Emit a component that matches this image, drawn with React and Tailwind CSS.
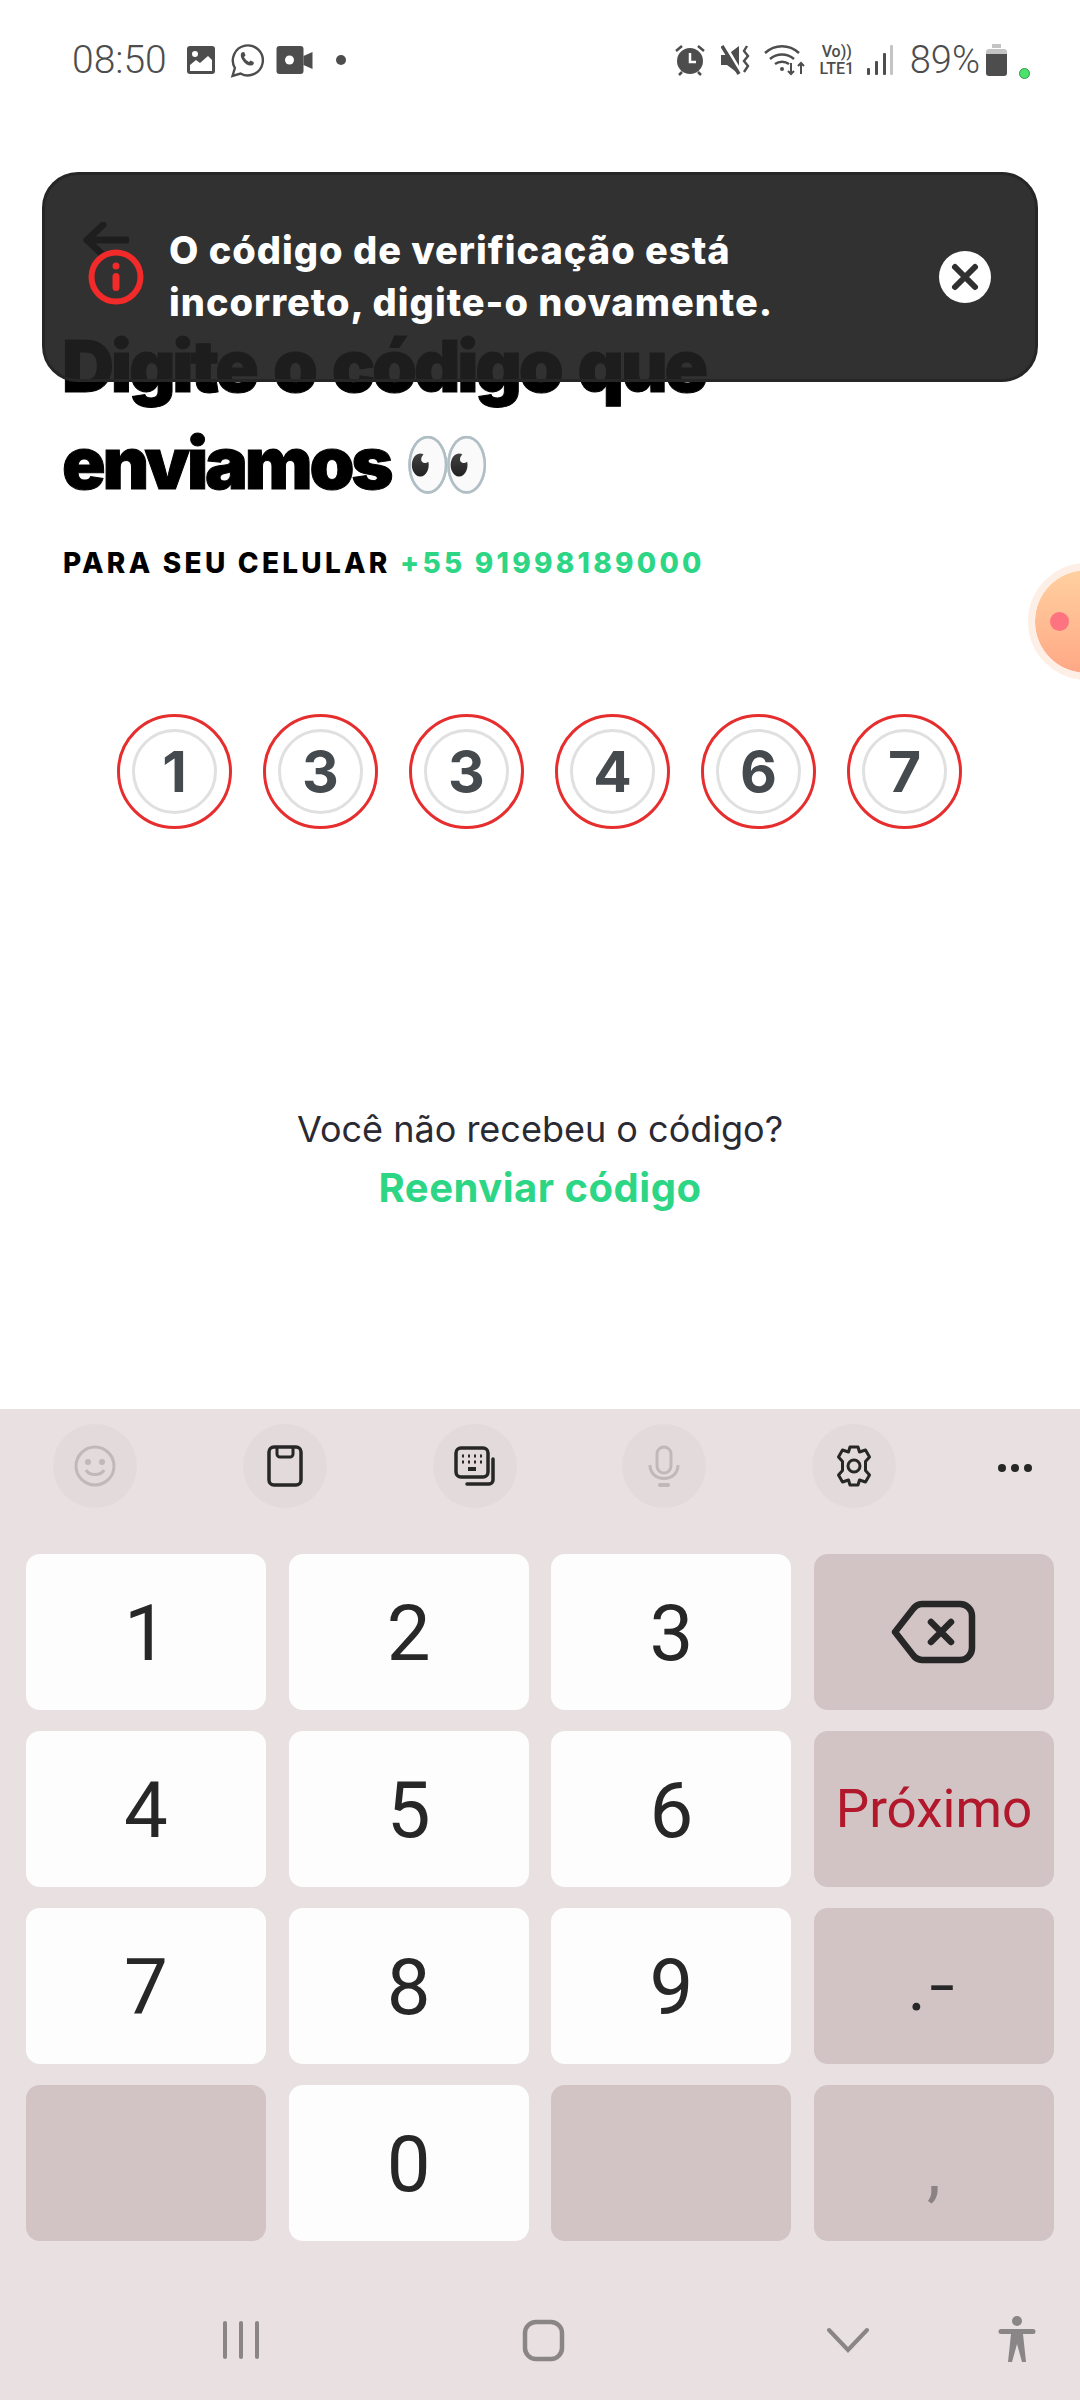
import React from 'react';

function StatusBar() {
  return (
    <div className="h-[118px] flex items-start justify-between pt-[40px] pl-[72px] pr-[50px] text-[#4d4d4d]">
      <div className="flex items-center h-[40px]">
        <span className="text-[39px] leading-[40px] font-['Roboto',sans-serif] font-light w-[100px]">08:50</span>
        <svg className="ml-[14px]" width="30" height="30" viewBox="0 0 30 30">
          <rect x="1" y="1" width="28" height="28" rx="3" fill="#4d4d4d" />
          <circle cx="9" cy="9" r="3" fill="#fff" />
          <path d="M4 26v-6l6-5 4 3 8-7 4 4v11z" fill="#fff" />
        </svg>
        <svg className="ml-[14px]" width="35" height="36" viewBox="0 0 34 36" fill="none">
          <path d="M2 34l2.400-8A15 15 0 1 1 10 31.500z" stroke="#4d4d4d" strokeWidth="2.400" />
          <path d="M12 10c-2 1-2.500 4 0 8s6 6 9 5.500c2-.5 3-2.500 2-3.500l-3-1.500-1.500 1.500c-2-1-4-3-5-5l1.500-1.500-1-3c-.5-.8-1.500-.8-2 0z" fill="#4d4d4d" />
        </svg>
        <svg className="ml-[11px]" width="37" height="28" viewBox="0 0 36 28">
          <rect x="0" y="0" width="27" height="28" rx="3" fill="#4d4d4d" />
          <circle cx="13" cy="14" r="4.500" fill="#fff" />
          <path d="M27 10l9-4v17l-9-4z" fill="#4d4d4d" />
        </svg>
        <span className="ml-[23px] w-[10px] h-[10px] rounded-full bg-[#4d4d4d]" />
      </div>
      <div className="flex items-center h-[40px]">
        <svg width="30" height="32" viewBox="0 0 30 32">
          <circle cx="15" cy="17" r="13" fill="#4d4d4d" />
          <path d="M15 9v9h6" stroke="#fff" strokeWidth="2.500" fill="none" />
          <path d="M1 7l6-5M29 7l-6-5M4 31l3-3M26 31l-3-3" stroke="#4d4d4d" strokeWidth="2.500" />
        </svg>
        <svg className="ml-[16px]" width="30" height="30" viewBox="0 0 30 30">
          <path d="M0 10h6l12-9v28L6 20H0z" fill="#4d4d4d" />
          <path d="M4 0l17 29" stroke="#fff" strokeWidth="3" />
          <path d="M1 1l17 28" stroke="#4d4d4d" strokeWidth="3.500" />
          <path d="M26 1l-3 5 4 5-4 5 4 5-4 6" stroke="#4d4d4d" strokeWidth="2.400" fill="none" />
        </svg>
        <svg className="ml-[13px]" width="42" height="32" viewBox="0 0 42 32" fill="none">
          <path d="M1 9c10-9 24-9 34 0M6 15c7-6 17-6 24 0M11 20c4-3 10-3 14 0" stroke="#4d4d4d" strokeWidth="2.500" />
          <circle cx="18" cy="25" r="2" fill="#4d4d4d" />
          <path d="M27 19v11M24 27l3 3 3-3M37 30V19M34 22l3-3 3 3" stroke="#4d4d4d" strokeWidth="2" />
        </svg>
        <div className="ml-[12px] w-[38px] flex flex-col items-center font-['Roboto',sans-serif] font-medium leading-none text-[16px]">
          <span className="h-[17px]">Vo))</span>
          <span className="h-[16px]">LTE1</span>
        </div>
        <svg className="ml-[10px]" width="28" height="30" viewBox="0 0 28 30">
          <rect x="1" y="23" width="3" height="7" rx="1" fill="#4d4d4d" />
          <rect x="9" y="16" width="3" height="14" rx="1" fill="#4d4d4d" />
          <rect x="17" y="8" width="3" height="22" rx="1" fill="#4d4d4d" />
          <rect x="24" y="0" width="3" height="30" rx="1" fill="#c4c4c4" />
        </svg>
        <span className="ml-[16px] text-[38px] leading-[40px] font-['Roboto',sans-serif] font-light">89%</span>
        <svg className="ml-[6px]" width="21" height="32" viewBox="0 0 21 32">
          <path d="M6 0h9v4H6z" fill="#c4c4c4" />
          <path d="M0 8a3 3 0 0 1 3-3h15a3 3 0 0 1 3 3v2H0z" fill="#c4c4c4" />
          <path d="M0 10h21v19a3 3 0 0 1-3 3H3a3 3 0 0 1-3-3z" fill="#4d4d4d" />
        </svg>
        <span className="ml-[12px] mt-[26px] w-[11px] h-[11px] rounded-full bg-[#4be36b] border border-[#2f9c48]" />
      </div>
    </div>
  );
}

function Toast() {
  return (
    <div className="absolute left-[42px] top-[172px] w-[996px] h-[210px] rounded-[36px] bg-[#1f1f1f]/[0.92] border-[3px] border-[#262626] flex items-center pl-[43px] pr-[44px]">
      <svg width="56" height="56" viewBox="0 0 56 56" fill="none" className="shrink-0">
        <circle cx="28" cy="28" r="24.500" stroke="#f22a2a" strokeWidth="6" />
        <circle cx="28" cy="17" r="3.500" fill="#f22a2a" />
        <rect x="24.500" y="24" width="7" height="18" rx="3.500" fill="#f22a2a" />
      </svg>
      <p className="ml-[25px] -mt-[3px] flex-1 text-white font-['Inter',sans-serif] font-extrabold text-[38px] leading-[52px] tracking-[1px]">
        O código de verificação está
        <br />
        incorreto, digite-o novamente.
      </p>
      <svg width="52" height="52" viewBox="0 0 52 52" className="shrink-0">
        <circle cx="26" cy="26" r="26" fill="#fff" />
        <path d="M16 16l20 20M36 16L16 36" stroke="#303030" strokeWidth="6" strokeLinecap="round" />
      </svg>
    </div>
  );
}

function Heading() {
  return (
    <div className="pl-[62px]">
      <button className="block h-[40px] mt-[102px] ml-[21px]" aria-label="Voltar">
        <svg width="46" height="36" viewBox="0 0 46 36" fill="none">
          <path d="M20 3L4 18l16 15M4 18h40" stroke="#111" strokeWidth="7" strokeLinecap="round" strokeLinejoin="round" />
        </svg>
      </button>
      <h1 className="mt-[58px] font-['Inter',sans-serif] font-black text-black text-[72px] leading-[96px] tracking-[-3.200px] [word-spacing:6px] [-webkit-text-stroke:1px_black]">
        Digite o código que
        <br />
        enviamos <span className="-ml-[5px] font-['Noto_Sans',sans-serif] text-[71px] tracking-normal">👀</span>
      </h1>
      <p className="mt-[35px] pl-[1px] font-['Inter',sans-serif] font-extrabold text-[28px] leading-[34px] tracking-[3.250px] text-black">
        PARA SEU CELULAR <span className="text-[#2dd685]">+55 91998189000</span>
      </p>
    </div>
  );
}

function CodeDigit({ value }) {
  return (
    <div className="w-[115px] h-[115px] rounded-full border-[3px] border-[#e62e2e] flex items-center justify-center">
      <div className="w-[85px] h-[85px] rounded-full border-[3px] border-[#e0e0e0] flex items-center justify-center font-['Inter',sans-serif] font-bold text-[57px] text-[#454a4f]">
        {value}
      </div>
    </div>
  );
}

function Icon({ disabled, children }) {
  return (
    <div className="w-[84px] h-[84px] rounded-full bg-[#e3dadb] flex items-center justify-center">
      <svg width="44" height="44" viewBox="0 0 44 44" fill="none" stroke={disabled ? '#c1b8b9' : '#272727'} strokeWidth="3">
        {children}
      </svg>
    </div>
  );
}

function Toolbar() {
  return (
    <div className="h-[145px] pl-[53px] flex items-start pt-[15px] gap-x-[105.8px]">
      <Icon disabled>
        <circle cx="22" cy="22" r="19" />
        <circle cx="15" cy="18" r="1.500" fill="#c1b8b9" />
        <circle cx="29" cy="18" r="1.500" fill="#c1b8b9" />
        <path d="M13 26c3 6 15 6 18 0" />
      </Icon>
      <Icon>
        <rect x="6" y="3" width="32" height="38" rx="5" strokeWidth="3.500" />
        <path d="M14 3v7a3 3 0 0 0 3 3h10a3 3 0 0 0 3-3V3" />
      </Icon>
      <Icon>
        <rect x="3" y="4" width="32" height="29" rx="5" strokeWidth="3.500" />
        <path d="M9 12h2M15 12h2M21 12h2M27 12h2M9 18h2M15 18h2M21 18h2M27 18h2" />
        <path d="M15 25h8" strokeWidth="4" />
        <path d="M40 15v21a4 4 0 0 1-4 4H14" strokeWidth="3.500" strokeLinecap="round" />
      </Icon>
      <Icon disabled>
        <rect x="15" y="3" width="14" height="26" rx="7" />
        <path d="M8 21c0 18 28 18 28 0" />
        <path d="M18 41h8" strokeWidth="4" strokeLinecap="round" />
      </Icon>
      <Icon>
        <circle cx="22" cy="22" r="6" />
        <path d="M18 3h8l1.500 5 6-2 4 7-4 4.500v9l4 4.500-4 7-6-2-1.500 5h-8l-1.500-5-6 2-4-7 4-4.500v-9l-4-4.500 4-7 6 2z" strokeLinejoin="round" />
      </Icon>
      <div className="w-[84px] h-[84px] -ml-[29px] flex items-center justify-center gap-[5px] mt-[2px]">
        <span className="w-[8px] h-[8px] rounded-full bg-[#272727]" />
        <span className="w-[8px] h-[8px] rounded-full bg-[#272727]" />
        <span className="w-[8px] h-[8px] rounded-full bg-[#272727]" />
      </div>
    </div>
  );
}

function Key({ children, dark, className = '' }) {
  return (
    <div className={`h-[156px] rounded-[14px] flex items-center justify-center font-['Roboto',sans-serif] text-[#272727] ${dark ? 'bg-[#d2c3c4]' : 'bg-[#fdfdfd]'} ${className}`}>
      {children}
    </div>
  );
}

function Keyboard() {
  const digit = 'text-[78px] pt-[3px]';
  return (
    <div className="absolute left-0 right-0 top-[1409px] h-[991px] bg-[#e8e0e1]">
      <Toolbar />
      <div className="grid grid-cols-[240px_240px_240px_240px] gap-x-[22.67px] gap-y-[21px] pl-[26px]">
        <Key className={digit}>1</Key>
        <Key className={digit}>2</Key>
        <Key className={digit}>3</Key>
        <Key dark>
          <svg width="85" height="64" viewBox="0 0 85 64" fill="none" stroke="#272727" strokeWidth="6.500" strokeLinecap="round" strokeLinejoin="round">
            <path d="M4 32L22 9a12 12 0 0 1 9-5h38a12 12 0 0 1 12 12v32a12 12 0 0 1-12 12H31a12 12 0 0 1-9-5z" />
            <path d="M40 22l20 20M60 22L40 42" />
          </svg>
        </Key>
        <Key className={digit}>4</Key>
        <Key className={digit}>5</Key>
        <Key className={digit}>6</Key>
        <Key dark className="text-[53px] pt-[2px] !text-[#b2182b]">Próximo</Key>
        <Key className={digit}>7</Key>
        <Key className={digit}>8</Key>
        <Key className={digit}>9</Key>
        <Key dark className="text-[70px] leading-none">
          <span className="-ml-[5px]">.</span>
          <span className="text-[92px] font-light ml-[3px]">-</span>
        </Key>
        <Key dark />
        <Key className={digit}>0</Key>
        <Key dark />
        <Key dark className="text-[70px] pt-[14px] !text-[#8a8283]">,</Key>
      </div>
      <NavBar />
    </div>
  );
}

function NavBar() {
  return (
    <div className="mt-[59px] h-[80px]">
      <div className="flex items-center h-full pl-[222px]">
        <svg width="38" height="40" viewBox="0 0 38 40" fill="#8a8586">
          <rect x="1" y="1" width="4" height="38" rx="2" />
          <rect x="17" y="1" width="4" height="38" rx="2" />
          <rect x="33" y="1" width="4" height="38" rx="2" />
        </svg>
        <svg className="ml-[262px]" width="43" height="43" viewBox="0 0 43 43" fill="none" stroke="#8a8586" strokeWidth="4.500">
          <rect x="3" y="3" width="37" height="37" rx="11" />
        </svg>
        <svg className="ml-[262px]" width="42" height="26" viewBox="0 0 42 26" fill="none" stroke="#8a8586" strokeWidth="4" strokeLinecap="round">
          <path d="M2 3l19 20L40 3" />
        </svg>
        <svg className="ml-[129px]" width="38" height="48" viewBox="0 0 38 48" fill="#8a8586">
          <circle cx="19" cy="5" r="5" />
          <path d="M3 13h32a2.500 2.500 0 0 1 0 5h-10l3 28h-4l-5-18-5 18h-4l3-28H3a2.500 2.500 0 0 1 0-5z" />
        </svg>
      </div>
    </div>
  );
}

export default function App() {
  const code = ['1', '3', '3', '4', '6', '7'];

  return (
    <div className="relative w-[1080px] h-[2400px] overflow-hidden bg-white">
      <StatusBar />
      <Heading />

      {/* OTP circles */}
      <div className="mt-[134px] pl-[117px] flex gap-[31px]">
        {code.map((digit, i) => (
          <CodeDigit key={i} value={digit} />
        ))}
      </div>

      {/* Resend */}
      <div className="mt-[277px] text-center font-['Inter',sans-serif]">
        <p className="text-[36px] leading-[46px] text-[#2a2a33]">Você não recebeu o código?</p>
        <p className="mt-[12px] text-[40px] leading-[48px] font-bold tracking-[0.5px] text-[#2dd685]">Reenviar código</p>
      </div>

      {/* Floating bubble, clipped by the right edge */}
      <div className="absolute left-[1028px] top-[563px] w-[117px] h-[117px] rounded-full bg-linear-to-b from-[#ffd0a0] to-[#ffa886] bg-clip-padding border-[7px] border-[#fdeee6] flex items-center pl-[15px]">
        <span className="w-[19px] h-[19px] rounded-full bg-[#fd7480]" />
      </div>

      <Toast />
      <Keyboard />
    </div>
  );
}
